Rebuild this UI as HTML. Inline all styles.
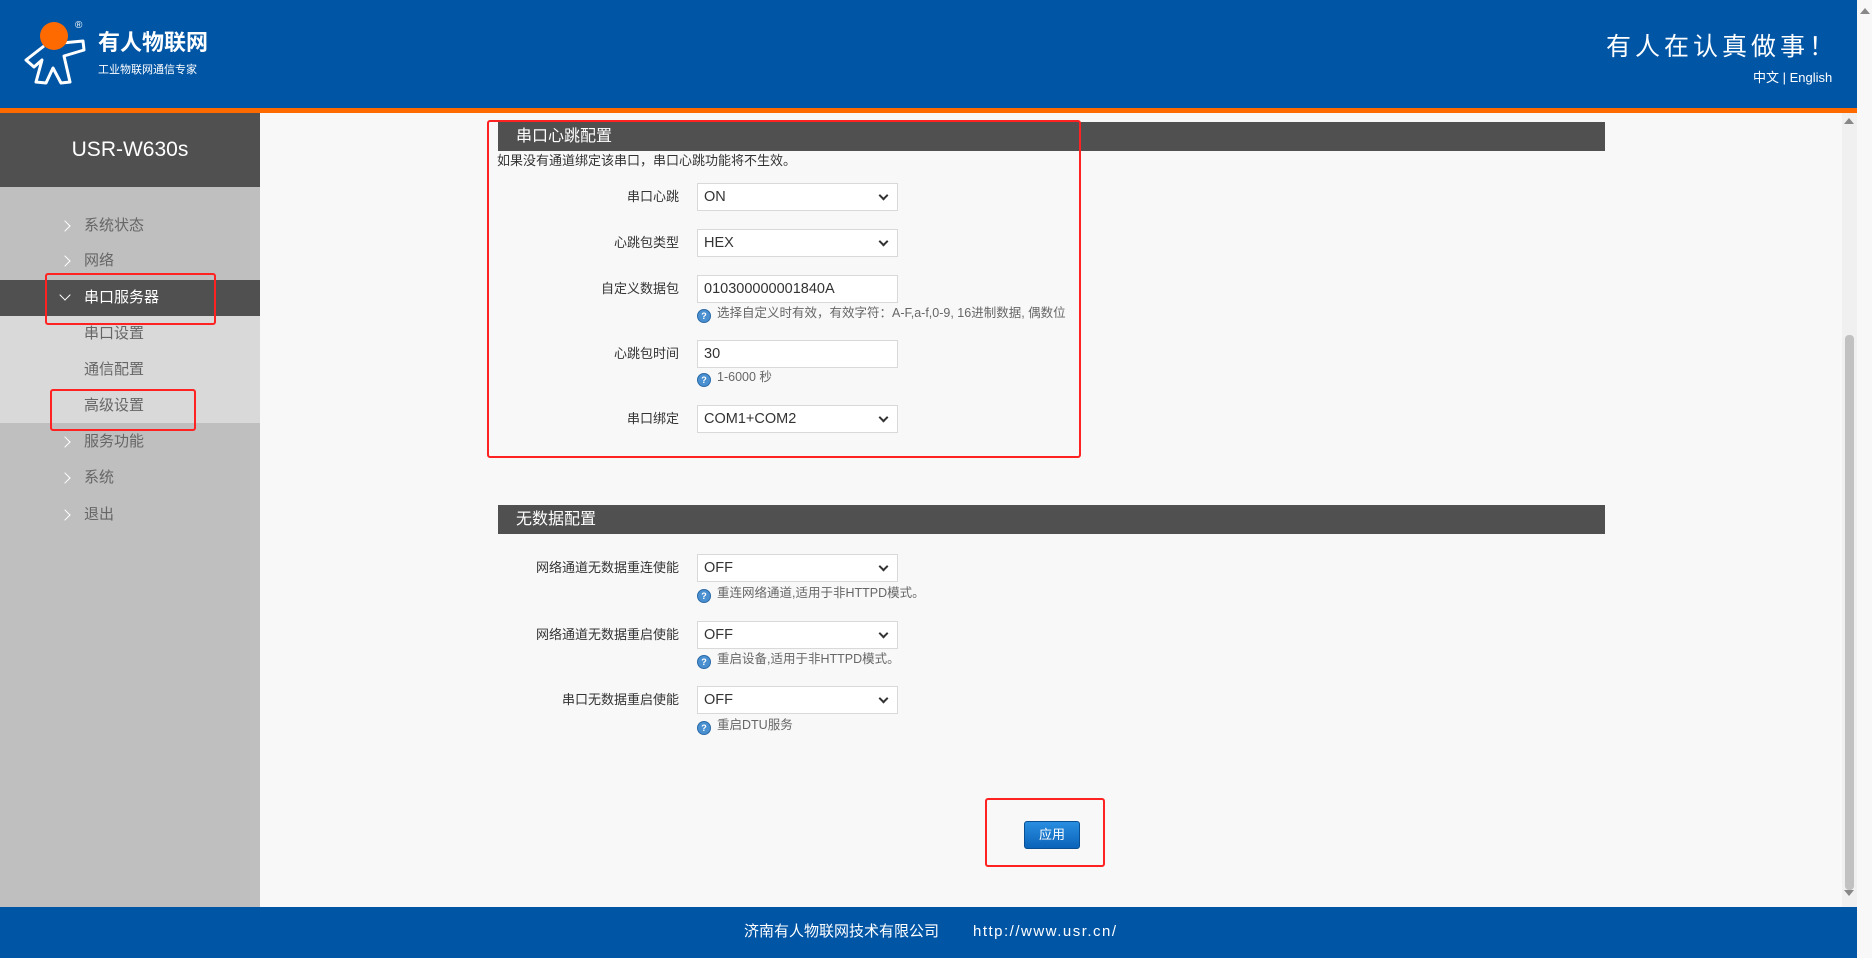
<!DOCTYPE html>
<html><head><meta charset="utf-8">
<style>
*{margin:0;padding:0;box-sizing:border-box}
body{width:1872px;height:958px;overflow:hidden;background:#fff;font-family:"Liberation Sans","Noto Sans CJK SC",sans-serif;position:relative}
.abs{position:absolute}
#hdr{left:0;top:0;width:1857px;height:108px;background:#0055a5}
#orange{left:0;top:108px;width:1857px;height:5px;background:#ff6a00}
#side{left:0;top:113px;width:260px;height:794px;background:#bfbfbf}
#sidetop{left:0;top:113px;width:260px;height:74px;background:#505050;color:#fff;font-size:21px;text-align:center;line-height:74px}
#main{left:260px;top:113px;width:1582px;height:794px;background:#f8f8f8}
#sb{left:1842px;top:113px;width:15px;height:794px;background:#f0f0f0}
#sbthumb{left:1845px;top:335px;width:9px;height:555px;background:#c1c1c1;border-radius:4px}
#outer{left:1857px;top:0;width:15px;height:958px;background:#f8f8f8}
#foot{left:0;top:907px;width:1857px;height:51px;background:#0055a5;color:#fff;font-size:15px;line-height:50px}
.mi{left:0;width:260px;height:36px;line-height:36px;font-size:15px;color:#666;padding-left:84px}
.arr{position:absolute;left:61px;top:14px;width:8px;height:8px;border-top:1.5px solid #fff;border-right:1.5px solid #fff;transform:rotate(45deg)}
.sec{left:498px;width:1107px;height:29px;background:#505050;color:#fff;font-size:16px;line-height:29px;padding-left:18px}
.lbl{width:260px;text-align:right;font-size:13px;color:#333;height:28px;line-height:28px}
.inp{height:28px;width:201px;border:1px solid #d9d9d9;background:#fff;font-size:14.5px;color:#333;line-height:26px;padding-left:6px}
.chev{position:absolute;right:10px;top:8px;width:7px;height:7px;border-right:2px solid #333;border-bottom:2px solid #333;transform:rotate(45deg)}
.help{font-size:12.5px;color:#666;height:16px;line-height:16px}
.q{display:inline-block;width:14px;height:14px;border-radius:50%;background:#4a90d0;border:1px solid #2a6aa8;color:#fff;font-size:9px;line-height:12px;text-align:center;vertical-align:-2px;margin-right:6px;font-weight:bold}
.red{border:2px solid #f22;border-radius:3px}
</style></head><body>
<div class="abs" id="hdr"></div>
<svg class="abs" style="left:18px;top:16px" width="72" height="72" viewBox="0 0 72 72">
<path d="M26 30 L8 44 L16 51 L24 44 L18 66 L28 67 L35 52 L43 67 L52 66 L46 40 L66 34 L65 25 L44 27" fill="none" stroke="#fff" stroke-width="3" stroke-linejoin="round"/>
<circle cx="36" cy="20" r="14" fill="#ff6a00"/>
<text x="57" y="12" fill="#fff" font-size="10" font-family="Liberation Sans,sans-serif">®</text>
</svg>
<div class="abs" style="left:98px;top:25px;color:#fff;font-size:22px;font-weight:bold">有人物联网</div>
<div class="abs" style="left:98px;top:61px;color:#fff;font-size:11px">工业物联网通信专家</div>
<div class="abs" style="left:1606px;top:27px;color:#fff;font-size:25px;letter-spacing:4px">有人在认真做事！</div>
<div class="abs" style="left:1753px;top:67px;color:#fff;font-size:13px">中文 | English</div>
<div class="abs" id="orange"></div>
<div class="abs" id="outer"></div>
<div class="abs" style="left:1860px;top:8px;width:0;height:0;border-left:5px solid transparent;border-right:5px solid transparent;border-bottom:6px solid #888"></div>
<div class="abs" id="side"></div>
<div class="abs" id="sidetop">USR-W630s</div>
<div class="abs mi" style="top:208px"><span class="arr"></span>系统状态</div>
<div class="abs mi" style="top:243px"><span class="arr"></span>网络</div>
<div class="abs mi" style="top:280px;background:#505050;color:#fff"><span class="arr" style="transform:rotate(135deg);top:11px"></span>串口服务器</div>
<div class="abs" style="left:0;top:316px;width:260px;height:107px;background:#d9d9d9"></div>
<div class="abs mi" style="top:316px">串口设置</div>
<div class="abs mi" style="top:352px">通信配置</div>
<div class="abs mi" style="top:388px">高级设置</div>
<div class="abs mi" style="top:424px"><span class="arr"></span>服务功能</div>
<div class="abs mi" style="top:460px"><span class="arr"></span>系统</div>
<div class="abs mi" style="top:497px"><span class="arr"></span>退出</div>
<div class="abs red" style="left:45px;top:273px;width:171px;height:52px"></div>
<div class="abs red" style="left:50px;top:389px;width:146px;height:42px"></div>
<div class="abs" id="main"></div>
<div class="abs" id="sb"></div>
<div class="abs" id="sbthumb"></div>
<div class="abs" style="left:1844px;top:118px;border-left:5px solid transparent;border-right:5px solid transparent;border-bottom:6px solid #888"></div>
<div class="abs" style="left:1844px;top:890px;border-left:5px solid transparent;border-right:5px solid transparent;border-top:6px solid #888"></div>

<div class="abs sec" style="top:122px">串口心跳配置</div>
<div class="abs" style="left:497px;top:150px;font-size:13px;color:#333">如果没有通道绑定该串口，串口心跳功能将不生效。</div>
<div class="abs lbl" style="left:419px;top:183px">串口心跳</div>
<div class="abs inp" style="left:697px;top:183px">ON<span class="chev"></span></div>
<div class="abs lbl" style="left:419px;top:229px">心跳包类型</div>
<div class="abs inp" style="left:697px;top:229px">HEX<span class="chev"></span></div>
<div class="abs lbl" style="left:419px;top:275px">自定义数据包</div>
<div class="abs inp" style="left:697px;top:275px">010300000001840A</div>
<div class="abs help" style="left:697px;top:305px"><span class="q">?</span>选择自定义时有效，有效字符：A-F,a-f,0-9, 16进制数据, 偶数位</div>
<div class="abs lbl" style="left:419px;top:340px">心跳包时间</div>
<div class="abs inp" style="left:697px;top:340px">30</div>
<div class="abs help" style="left:697px;top:369px"><span class="q">?</span>1-6000 秒</div>
<div class="abs lbl" style="left:419px;top:405px">串口绑定</div>
<div class="abs inp" style="left:697px;top:405px">COM1+COM2<span class="chev"></span></div>
<div class="abs red" style="left:487px;top:120px;width:594px;height:338px"></div>

<div class="abs sec" style="top:505px">无数据配置</div>
<div class="abs lbl" style="left:419px;top:554px">网络通道无数据重连使能</div>
<div class="abs inp" style="left:697px;top:554px">OFF<span class="chev"></span></div>
<div class="abs help" style="left:697px;top:585px"><span class="q">?</span>重连网络通道,适用于非HTTPD模式。</div>
<div class="abs lbl" style="left:419px;top:621px">网络通道无数据重启使能</div>
<div class="abs inp" style="left:697px;top:621px">OFF<span class="chev"></span></div>
<div class="abs help" style="left:697px;top:651px"><span class="q">?</span>重启设备,适用于非HTTPD模式。</div>
<div class="abs lbl" style="left:419px;top:686px">串口无数据重启使能</div>
<div class="abs inp" style="left:697px;top:686px">OFF<span class="chev"></span></div>
<div class="abs help" style="left:697px;top:717px"><span class="q">?</span>重启DTU服务</div>

<div class="abs" style="left:1024px;top:821px;width:56px;height:28px;background:linear-gradient(#2a8ee0,#0a63b8);border:1px solid #0a4f94;border-radius:3px;color:#fff;font-size:13px;text-align:center;line-height:26px">应用</div>
<div class="abs red" style="left:985px;top:798px;width:120px;height:69px"></div>

<div class="abs" id="foot"><span class="abs" style="left:744px">济南有人物联网技术有限公司</span><span class="abs" style="left:973px;letter-spacing:1.5px">http://www.usr.cn/</span></div>
</body></html>
